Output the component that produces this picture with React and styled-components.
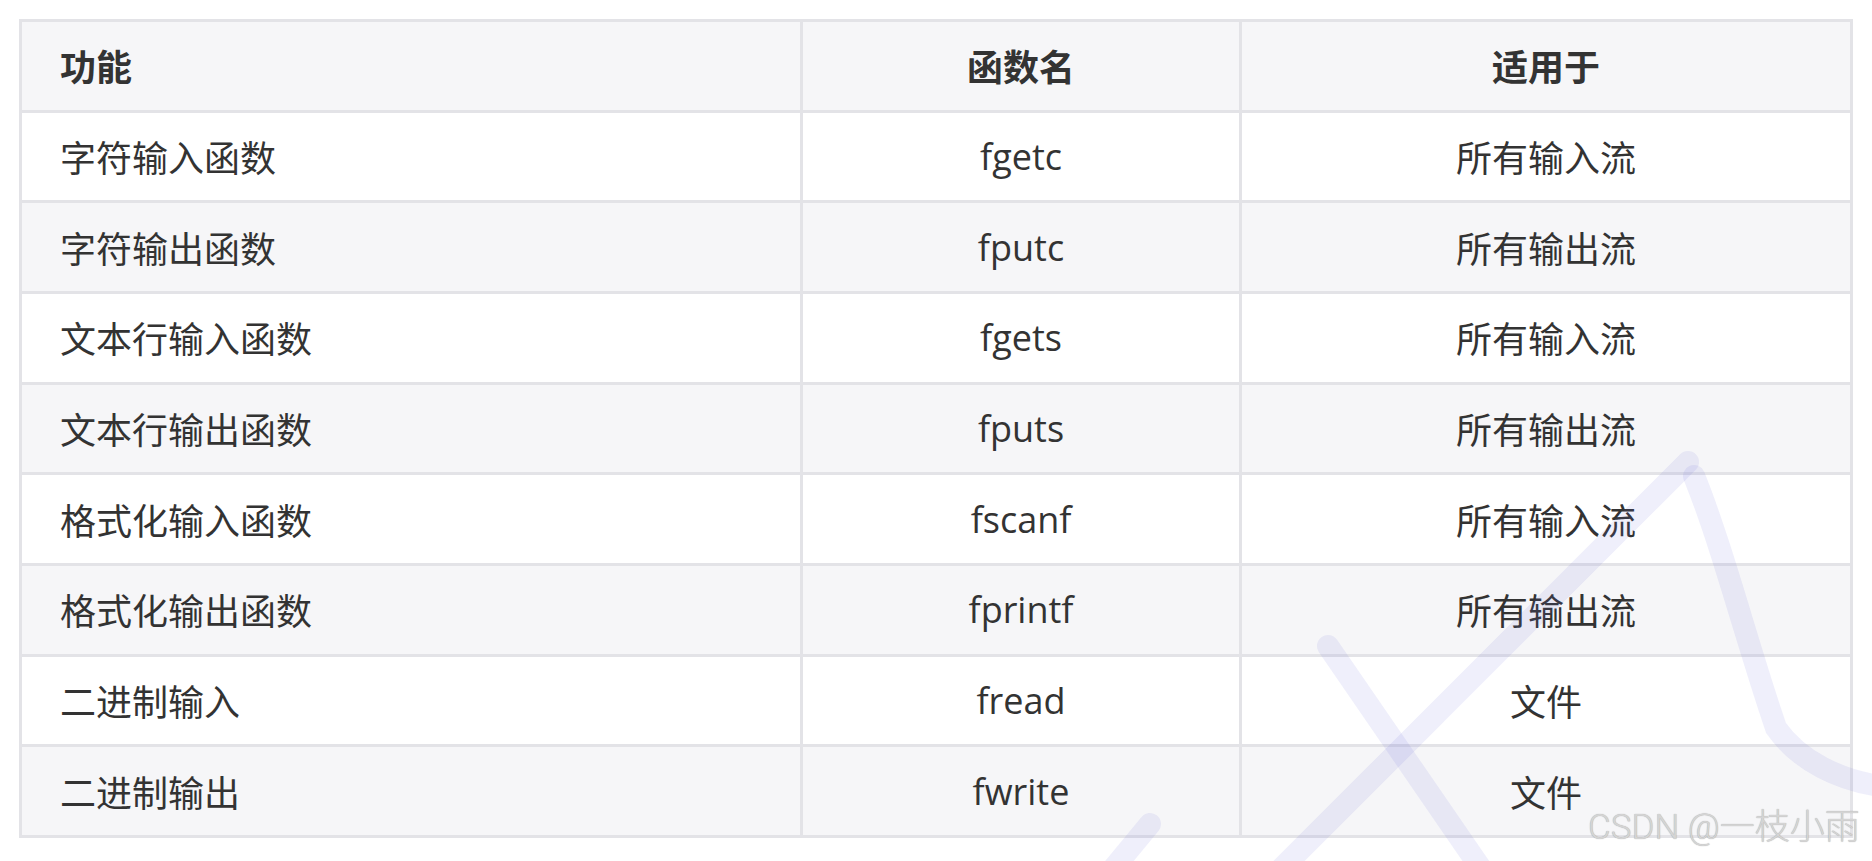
import React from 'react';
import styled, { createGlobalStyle } from 'styled-components';

const rows = [
  ['字符输入函数', 'fgetc', '所有输入流'],
  ['字符输出函数', 'fputc', '所有输出流'],
  ['文本行输入函数', 'fgets', '所有输入流'],
  ['文本行输出函数', 'fputs', '所有输出流'],
  ['格式化输入函数', 'fscanf', '所有输入流'],
  ['格式化输出函数', 'fprintf', '所有输出流'],
  ['二进制输入', 'fread', '文件'],
  ['二进制输出', 'fwrite', '文件'],
];

export default () => (
  <Page>
    <GlobalStyle />
    <Table>
      <Cell head>功能</Cell>
      <Cell head center>函数名</Cell>
      <Cell head center>适用于</Cell>
      {rows.map((row, i) =>
        row.map((text, j) => (
          <Cell key={`${i}-${j}`} shaded={i % 2 === 1} center={j > 0}>
            {text}
          </Cell>
        ))
      )}
    </Table>
    <Watermark viewBox="0 0 1872 861">
      <path d="M1688 462 L1280 870" />
      <path d="M1328 646 L1482 870" />
      <path d="M1694 476 C1722 545 1746 640 1776 728 C1800 762 1840 780 1880 786" />
      <path d="M1112 870 L1150 824" />
    </Watermark>
    <Signature>CSDN @一枝小雨</Signature>
  </Page>
);

const GlobalStyle = createGlobalStyle`
  html, body {
    margin: 0;
    background: #ffffff;
  }
  body {
    font-family: "Open Sans", "Noto Sans CJK SC", sans-serif;
  }
`;

const Page = styled.div`
  position: relative;
  width: 1872px;
  height: 861px;
  overflow: hidden;
  padding: 19px 0 0 19px;
  box-sizing: border-box;
`;

const Table = styled.div`
  display: grid;
  grid-template-columns: 778px 436px 608px;
  grid-auto-rows: 87.67px;
  gap: 3px;
  padding: 3px;
  width: max-content;
  background: #e3e3e7;
`;

const Cell = styled.div`
  display: flex;
  align-items: center;
  justify-content: ${(p) => (p.center ? 'center' : 'flex-start')};
  padding: 0 38px;
  background: ${(p) => (p.head || p.shaded ? '#f6f6f8' : '#ffffff')};
  color: #333333;
  font-size: 36px;
  font-weight: ${(p) => (p.head ? 700 : 400)};
  white-space: nowrap;
`;

const Watermark = styled.svg`
  position: absolute;
  top: 0;
  left: 0;
  width: 1872px;
  height: 861px;
  pointer-events: none;
  fill: none;
  stroke: rgba(110, 110, 215, 0.11);
  stroke-width: 22;
  stroke-linecap: round;
`;

const Signature = styled.div`
  position: absolute;
  left: 1588px;
  top: 810px;
  font-family: Roboto, "Noto Sans CJK SC", sans-serif;
  font-size: 35px;
  font-weight: 300;
  line-height: 1;
  color: #d4d4d4;
  white-space: nowrap;
  text-shadow: 0 0 1px rgba(0, 0, 0, 0.35);
`;
